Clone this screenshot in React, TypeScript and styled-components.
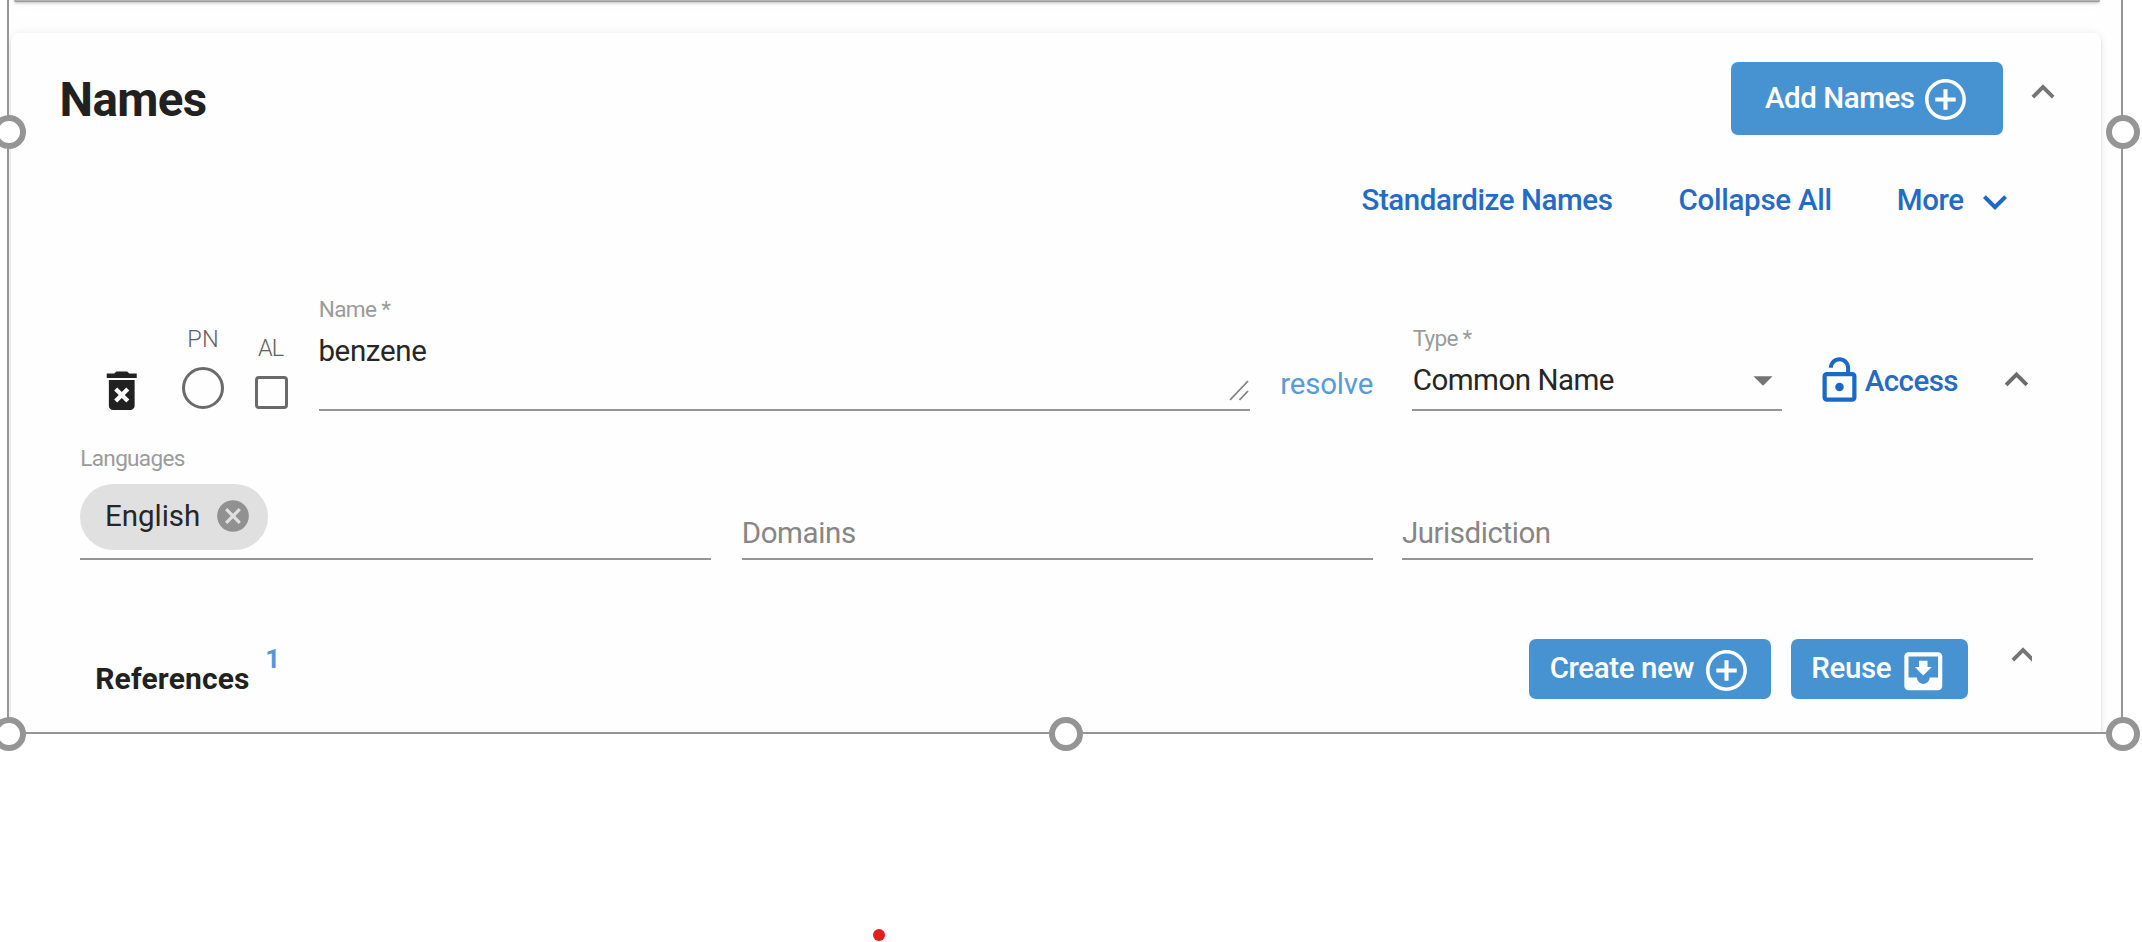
import React from "react";
import styled, { createGlobalStyle, css } from "styled-components";

const BLUE = "#4793d1";
const LINK = "#256ac4";
const INK = "#212121";
const RULE = "#969696";

const GlobalStyle = createGlobalStyle`
  *, *::before, *::after { box-sizing: border-box; }
  body { margin: 0; background: #fff; font-family: Roboto, "Noto Sans", sans-serif; }
  button { border: 0; padding: 0; background: none; font-family: inherit; text-align: left; }
`;

interface Place {
  $top?: number;
  $left?: number;
  $width?: number;
}

const place = css<Place>`
  flex: none;
  margin-top: ${(p) => p.$top ?? 0}px;
  margin-left: ${(p) => p.$left ?? 0}px;
  ${(p) => p.$width !== undefined && `width: ${p.$width}px;`}
`;

interface TextProps extends Place {
  $spacing?: number;
}

const text = css<TextProps>`
  ${place}
  display: block;
  line-height: 40px;
  white-space: nowrap;
  letter-spacing: ${(p) => p.$spacing ?? 0}px;
`;

/* ---------- page ---------- */

const Page = styled.div`
  position: relative;
  width: 2142px;
  height: 942px;
  overflow: hidden;
  background: #fff;
`;

const Viewport = styled.div`
  width: 2114px;
  height: 733px;
  margin-left: 8px;
  overflow: hidden;
  background: #fefefe;
`;

const PreviousCard = styled.div`
  width: 2086px;
  height: 2px;
  margin: 0 0 31px 6px;
  background: #b5b5b5;
  border-bottom: 1px solid #989898;
  border-radius: 0 0 5px 5px;
  box-shadow: 0 1px 3px rgba(0, 0, 0, 0.3), 0 3px 14px rgba(0, 0, 0, 0.06);
`;

const Card = styled.section`
  width: 2090px;
  height: 740px;
  margin-left: 3px;
  background: #fefefe;
  border-radius: 8px;
  box-shadow: 0 2px 3px rgba(0, 0, 0, 0.14), 0 0 10px rgba(0, 0, 0, 0.07);
`;

const Row = styled.div<{ $height: number }>`
  display: flex;
  align-items: flex-start;
  height: ${(p) => p.$height}px;
`;

/* ---------- text ---------- */

const Title = styled.h2`
  ${text}
  margin-bottom: 0;
  font-size: 47.5px;
  font-weight: 700;
  color: ${INK};
`;

const Subtitle = styled.h3`
  ${text}
  margin-bottom: 0;
  font-size: 30px;
  font-weight: 700;
  color: ${INK};
`;

const Count = styled.sup`
  ${text}
  font-size: 26px;
  font-weight: 700;
  color: #4f99d8;
`;

const LinkText = styled.span`
  ${text}
  font-size: 29.5px;
  font-weight: 500;
  color: ${LINK};
`;

const Resolve = styled.a`
  ${text}
  font-size: 29.5px;
  color: #569bda;
`;

const FieldLabel = styled.label`
  ${text}
  font-size: 22.6px;
  color: #9b9b9b;
`;

const ToggleLabel = styled.label`
  ${text}
  font-size: 23.5px;
  font-weight: 300;
  color: #606060;
`;

const FieldValue = styled.span<{ $muted?: boolean }>`
  ${text}
  font-size: 29.5px;
  color: ${(p) => (p.$muted ? "#868686" : "#262626")};
`;

/* ---------- controls ---------- */

const ActionButton = styled.button<{ $height: number }>`
  ${place}
  display: flex;
  align-items: flex-start;
  height: ${(p) => p.$height}px;
  border-radius: 7px;
  background: ${BLUE};
  color: #fff;
`;

const ButtonText = styled.span`
  ${text}
  font-size: 29.5px;
  font-weight: 500;
`;

const Field = styled.div<{ $height: number }>`
  ${place}
  display: flex;
  flex-direction: column;
  align-items: flex-start;
  height: ${(p) => p.$height}px;
  border-bottom: 2px solid ${RULE};
`;

const FieldBody = styled.div`
  display: flex;
  align-items: flex-start;
  width: 100%;
`;

const Toggle = styled.div`
  ${place}
  display: flex;
  flex-direction: column;
  align-items: flex-start;
`;

const Radio = styled.span`
  ${place}
  width: 42px;
  height: 42px;
  border: 3px solid #6a6a6a;
  border-radius: 50%;
`;

const Checkbox = styled.span`
  ${place}
  width: 33px;
  height: 33px;
  border: 3px solid #6a6a6a;
  border-radius: 4px;
`;

const Chip = styled.div`
  ${place}
  display: flex;
  align-items: flex-start;
  width: 188px;
  height: 66px;
  border-radius: 33px;
  background: #e0e0e0;
`;

const Glyph = styled.svg<Place & { $color: string }>`
  ${place}
  display: block;
  fill: ${(p) => p.$color};
`;

/* ---------- icons ---------- */

const PATHS = {
  up: "M7.41 15.41 12 10.83l4.59 4.58L18 14l-6-6-6 6z",
  down: "M7.41 8.59 12 13.17l4.59-4.58L18 10l-6 6-6-6 1.41-1.41z",
  arrow: "M7 10l5 5 5-5z",
  trash:
    "M6 19c0 1.1.9 2 2 2h8c1.1 0 2-.9 2-2V7H6v12zm2.46-7.12 1.41-1.41L12 12.59l2.12-2.12 1.41 1.41L13.41 14l2.12 2.12-1.41 1.41L12 15.41l-2.12 2.12-1.41-1.41L10.59 14l-2.13-2.12zM15.5 4l-1-1h-5l-1 1H5v2h14V4z",
  lock: "M12 17c1.1 0 2-.9 2-2s-.9-2-2-2-2 .9-2 2 .9 2 2 2zm6-9h-1V6c0-2.76-2.24-5-5-5S7 3.24 7 6h1.9c0-1.71 1.39-3.1 3.1-3.1s3.1 1.39 3.1 3.1v2H6c-1.1 0-2 .9-2 2v10c0 1.1.9 2 2 2h12c1.1 0 2-.9 2-2V10c0-1.1-.9-2-2-2zm0 12H6V10h12v10z",
  plus: "M13 7h-2v4H7v2h4v4h2v-4h4v-2h-4V7zm-1-5C6.48 2 2 6.48 2 12s4.48 10 10 10 10-4.48 10-10S17.52 2 12 2zm0 18.3c-4.58 0-8.3-3.72-8.3-8.3S7.42 3.7 12 3.7s8.3 3.72 8.3 8.3-3.72 8.3-8.3 8.3z",
  inbox:
    "M19 3H4.99c-1.11 0-1.98.9-1.98 2L3 19c0 1.1.88 2 1.99 2H19c1.1 0 2-.9 2-2V5c0-1.1-.9-2-2-2zm0 12h-4c0 1.66-1.35 3-3 3s-3-1.34-3-3H4.99V5H19v10zm-3-5h-2V7h-4v3H8l4 4 4-4z",
  cancel:
    "M12 2C6.47 2 2 6.47 2 12s4.47 10 10 10 10-4.47 10-10S17.53 2 12 2zm5 13.59L15.59 17 12 13.41 8.41 17 7 15.59 10.59 12 7 8.41 8.41 7 12 10.59 15.59 7 17 8.41 13.41 12 17 15.59z",
};

interface IconProps {
  name: keyof typeof PATHS;
  size: number;
  color?: string;
  top?: number;
  left?: number;
}

const Icon = ({ name, size, color = "#fff", top, left }: IconProps) => (
  <Glyph viewBox="0 0 24 24" width={size} height={size} $color={color} $top={top} $left={left}>
    <path d={PATHS[name]} />
  </Glyph>
);

const CutOff = styled.div`
  ${place}
  height: 50px;
  overflow: hidden;
`;

/* ---------- selection overlay ---------- */

const SelectionFrame = styled.div`
  position: absolute;
  top: -10px;
  left: 7px;
  width: 2116px;
  height: 744px;
  border: 2px solid #959595;
`;

const Handle = styled.span<{ $x: number; $y: number }>`
  position: absolute;
  left: ${(p) => p.$x - 17}px;
  top: ${(p) => p.$y - 17}px;
  width: 34px;
  height: 34px;
  border: 6px solid #959595;
  border-radius: 50%;
  background: #fff;
`;

const RedDot = styled.span`
  position: absolute;
  left: 873px;
  top: 929px;
  width: 12px;
  height: 12px;
  border-radius: 50%;
  background: #e81c1c;
`;

const HANDLES: [number, number][] = [
  [9, 132],
  [2123, 132],
  [9, 734],
  [1066, 734],
  [2123, 734],
];

export default function App() {
  return (
    <Page>
      <GlobalStyle />
      <Viewport>
        <PreviousCard />
        <Card>
          <Row $height={117}>
            <Title $top={46.6} $left={48.6} $width={1671.4} $spacing={-0.65}>Names</Title>
            <ActionButton $top={29} $width={272} $height={73}>
              <ButtonText $top={16} $left={34} $width={150} $spacing={-0.46}>Add Names</ButtonText>
              <Icon name="plus" size={49} top={13} left={6} />
            </ActionButton>
            <Icon name="up" size={46} color="#757575" top={36} left={17.5} />
          </Row>

          <Row $height={130}>
            <LinkText $top={29.8} $left={1350.5} $width={252} $spacing={-0.42}>Standardize Names</LinkText>
            <LinkText $top={29.8} $left={65} $width={153} $spacing={-0.27}>Collapse All</LinkText>
            <LinkText $top={29.8} $left={65.3} $width={67.2} $spacing={-0.4}>More</LinkText>
            <Icon name="down" size={48} color="#1a69c7" top={27.5} left={6.7} />
          </Row>

          <Row $height={150}>
            <Icon name="trash" size={51.5} color={INK} top={85} left={85} />
            <Toggle $left={34.5} $width={42}>
              <ToggleLabel $top={38.9} $left={5.3} $spacing={0.2}>PN</ToggleLabel>
              <Radio $top={8.2} />
            </Toggle>
            <Toggle $left={31} $width={33}>
              <ToggleLabel $top={47.6} $left={3} $spacing={-0.9}>AL</ToggleLabel>
              <Checkbox $top={8} />
            </Toggle>
            <Field $left={30.7} $width={931} $height={131}>
              <FieldLabel $top={9.8} $spacing={-0.65}>Name *</FieldLabel>
              <FieldBody>
                <FieldValue $top={0.9} $left={-0.3} $width={911.3} $spacing={-0.35}>benzene</FieldValue>
                <Glyph width="20" height="22" $color="none" $top={50} $left={-1}>
                  <path d="M1 20 19 1M10.5 20 19 11" stroke="#808080" strokeWidth="1.8" />
                </Glyph>
              </FieldBody>
            </Field>
            <Resolve $top={84.2} $left={30.5} $width={93} $spacing={-0.2}>resolve</Resolve>
            <Field $left={39} $width={370} $height={131}>
              <FieldLabel $top={39} $left={0.5} $spacing={-0.75}>Type *</FieldLabel>
              <FieldBody>
                <FieldValue $top={1.4} $left={0.5} $width={329} $spacing={-0.5}>Common Name</FieldValue>
                <Icon name="arrow" size={46} color="#757575" top={-2} left={-2} />
              </FieldBody>
            </Field>
            <Icon name="lock" size={51} color="#1a69c7" top={74.6} left={32} />
            <LinkText $top={80.6} $left={-0.5} $width={95} $spacing={-0.55}>Access</LinkText>
            <Icon name="up" size={47} color="#6c6c6c" top={76} left={33.5} />
          </Row>

          <Row $height={185}>
            <Field $left={69.3} $width={631} $height={130}>
              <FieldLabel $top={9} $left={0} $spacing={-0.7}>Languages</FieldLabel>
              <Chip $top={5}>
                <FieldValue $top={12.3} $left={24.6} $width={103.4} $spacing={0}>English</FieldValue>
                <Icon name="cancel" size={38} color="#919191" top={13.3} left={5.9} />
              </Chip>
            </Field>
            <Field $left={30.4} $width={631} $height={130}>
              <FieldValue $muted $top={83.4} $left={0} $spacing={-0.38}>Domains</FieldValue>
            </Field>
            <Field $left={29.2} $width={631} $height={130}>
              <FieldValue $muted $top={83.4} $left={0} $spacing={-0.45}>Jurisdiction</FieldValue>
            </Field>
          </Row>

          <Row $height={118}>
            <Subtitle $top={44} $left={84.2} $width={159.3} $spacing={0.15}>References</Subtitle>
            <Count $top={24.2} $left={10.8} $width={14.7}>1</Count>
            <ActionButton $top={23.6} $left={1249} $width={242.5} $height={60}>
              <ButtonText $top={9.6} $left={20.7} $width={146} $spacing={-0.38}>Create new</ButtonText>
              <Icon name="plus" size={49} top={7} left={6.5} />
            </ActionButton>
            <ActionButton $top={23.6} $left={19.8} $width={176.7} $height={60}>
              <ButtonText $top={9.6} $left={20} $width={82} $spacing={-0.35}>Reuse</ButtonText>
              <Icon name="inbox" size={50.6} top={7} left={5} />
            </ActionButton>
            <CutOff $top={17.4} $left={32} $width={32}>
              <Icon name="up" size={46} color="#757575" top={0} left={0} />
            </CutOff>
          </Row>
        </Card>
      </Viewport>

      <SelectionFrame />
      {HANDLES.map(([x, y]) => (
        <Handle key={`${x}-${y}`} $x={x} $y={y} />
      ))}
      <RedDot />
    </Page>
  );
}
